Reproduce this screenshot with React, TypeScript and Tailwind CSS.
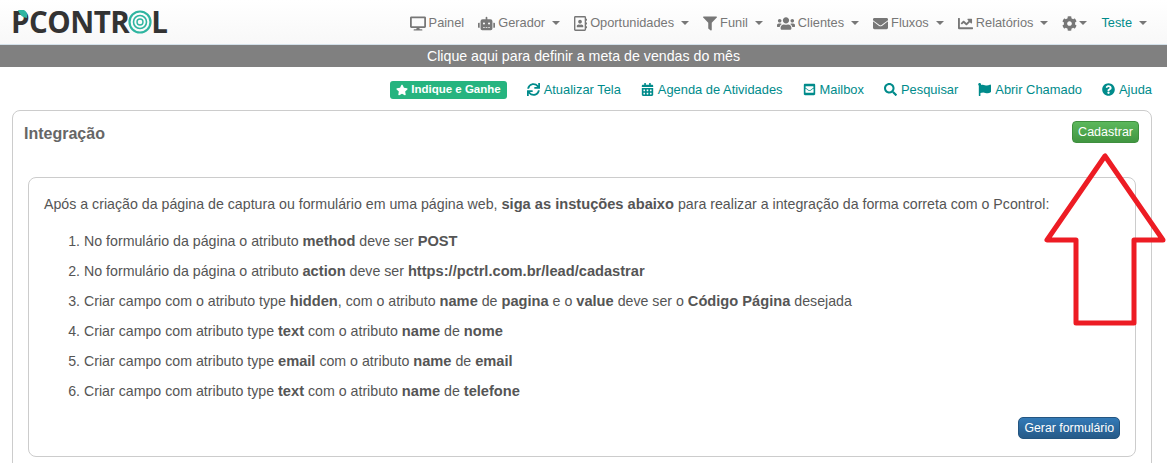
import React from "react";
import {
  FaCalendarAlt,
  FaChartLine,
  FaCog,
  FaDesktop,
  FaEnvelope,
  FaEnvelopeSquare,
  FaFilter,
  FaFlag,
  FaQuestionCircle,
  FaRegAddressBook,
  FaRobot,
  FaSearch,
  FaStar,
  FaSync,
  FaUsers,
} from "react-icons/fa";

const NAV = [
  { icon: FaDesktop, label: "Painel", w: "w-[16px]" },
  { icon: FaRobot, label: "Gerador", caret: true, w: "w-[17px]" },
  { icon: FaRegAddressBook, label: "Oportunidades", caret: true, w: "w-[13px]" },
  { icon: FaFilter, label: "Funil", caret: true, w: "w-[14px]" },
  { icon: FaUsers, label: "Clientes", caret: true, w: "w-[18px]" },
  { icon: FaEnvelope, label: "Fluxos", caret: true, w: "w-[15px]" },
  { icon: FaChartLine, label: "Relatórios", caret: true, w: "w-[15px]" },
];

const ACTIONS = [
  { icon: FaSync, label: "Atualizar Tela" },
  { icon: FaCalendarAlt, label: "Agenda de Atividades" },
  { icon: FaEnvelopeSquare, label: "Mailbox" },
  { icon: FaSearch, label: "Pesquisar" },
  { icon: FaFlag, label: "Abrir Chamado" },
  { icon: FaQuestionCircle, label: "Ajuda" },
];

const Caret = () => (
  <span className="ml-[4px] inline-block h-0 w-0 border-x-[4px] border-t-[4px] border-x-transparent border-t-[#777]" />
);

const Logo = () => (
  <div className="mt-[-3px] flex items-center text-[#333] font-['Open_Sans',sans-serif] font-bold text-[29.5px] leading-none tracking-[-0.5px]">
    <span className="relative">
      P
      <svg className="absolute left-[6px] top-[3px]" width="12" height="9" viewBox="0 0 12 9">
        <path d="M1 0 H7 Q11 2 10 8 Q3 7 1 0Z" fill="#2fb5a0" />
      </svg>
    </span>
    <span>CONTR</span>
    <svg width="24" height="24" viewBox="0 0 24 24" fill="none" stroke="#2fb5a0" className="mx-[-1px]">
      <circle cx="12" cy="12" r="10.5" strokeWidth="2.2" />
      <circle cx="12" cy="12" r="6.5" strokeWidth="1.6" />
      <circle cx="12" cy="12" r="3" strokeWidth="1.4" />
    </svg>
    <span>L</span>
  </div>
);

const App = () => {
  return (
    <div className="relative h-[463px] overflow-hidden bg-white font-['Liberation_Sans',Arial,sans-serif] text-[14.2px] text-[#555] [&_b]:text-[14.65px]">
      <nav className="flex h-[45px] items-center justify-between border-b border-[#d3e0e9] bg-gradient-to-b from-white to-[#f8f8f8] pl-[11px] pr-[20px] pt-[2px]">
        <Logo />
        <div className="flex items-center gap-[14px] text-[12.8px] text-[#777]">
          {NAV.map((n) => {
            const Icon = n.icon;
            return (
              <div key={n.label} className="flex items-center gap-[3px]">
                <Icon className={`${n.w} h-[15px]`} />
                <span>{n.label}</span>
                {n.caret && <Caret />}
              </div>
            );
          })}
          <div className="flex items-center">
            <FaCog className="h-[15px] w-[15px]" />
            <span className="ml-[2px] inline-block h-0 w-0 border-x-[4px] border-t-[4px] border-x-transparent border-t-[#777]" />
          </div>
          <div className="flex items-center text-[#008b8b]">
            <span>Teste</span>
            <span className="ml-[7px] inline-block h-0 w-0 border-x-[4px] border-t-[4px] border-x-transparent border-t-[#777]" />
          </div>
        </div>
      </nav>

      <div className="flex h-[22px] items-center justify-center bg-[#808080] pt-[1px] text-[14.2px] text-white">
        Clique aqui para definir a meta de vendas do mês
      </div>

      <div className="flex h-[43px] items-center justify-end gap-[20px] pr-[15px] pt-[3px] text-[12.9px] text-[#008b8b]">
        <div className="flex h-[18px] items-center gap-[3px] rounded-[3px] bg-[#26b47f] px-[6px] text-[11.5px] font-bold text-white">
          <FaStar className="h-[12px] w-[12px]" />
          Indique e Ganhe
        </div>
        {ACTIONS.map((a) => {
          const Icon = a.icon;
          return (
            <div key={a.label} className="flex items-center gap-[4px]">
              <Icon className="h-[13px] w-[13px]" />
              <span>{a.label}</span>
            </div>
          );
        })}
      </div>

      <div className="ml-[12px] mr-[15px] h-[400px] rounded-[8px] border border-[#ccc] px-[15px] pt-[10px]">
        <div className="flex items-start justify-between">
          <h1 className="mt-[2px] ml-[-4px] text-[16px] font-bold leading-[22px] text-[#666]">Integração</h1>
          <button className="mr-[-3px] h-[22px] rounded-[4px] border border-[#3e8f3e] bg-gradient-to-b from-[#5cb85c] to-[#419641] px-[5px] text-[12.5px] text-white">
            Cadastrar
          </button>
        </div>
        <div className="mt-[32px] h-[280px] rounded-[8px] border border-[#ccc] pl-[15px] pr-[15px] pt-[16px]">
          <p className="leading-[20px]">
            Após a criação da página de captura ou formulário em uma página web,{" "}
            <b>siga as instuções abaixo</b> para realizar a integração da forma correta com o Pcontrol:
          </p>
          <ol className="mt-[12px] list-decimal pl-[40px] leading-[30px]">
            <li>No formulário da página o atributo <b>method</b> deve ser <b>POST</b></li>
            <li>No formulário da página o atributo <b>action</b> deve ser <b>https://pctrl.com.br/lead/cadastrar</b></li>
            <li>Criar campo com o atributo type <b>hidden</b>, com o atributo <b>name</b> de <b>pagina</b> e o <b>value</b> deve ser o <b>Código Página</b> desejada</li>
            <li>Criar campo com atributo type <b>text</b> com o atributo <b>name</b> de <b>nome</b></li>
            <li>Criar campo com atributo type <b>email</b> com o atributo <b>name</b> de <b>email</b></li>
            <li>Criar campo com atributo type <b>text</b> com o atributo <b>name</b> de <b>telefone</b></li>
          </ol>
          <div className="mt-[11px] flex justify-end">
            <button className="h-[22px] rounded-[5px] border border-[#245580] bg-gradient-to-b from-[#337ab7] to-[#265a88] px-[5px] text-[12.3px] text-white">
              Gerar formulário
            </button>
          </div>
        </div>
      </div>

      <svg className="absolute left-[1040px] top-[150px]" width="127" height="180" viewBox="1040 150 127 180" fill="none">
        <path
          d="M1105 156 L1047 240 H1076 V323 H1134 V240 H1163 Z"
          stroke="#ed1c24"
          strokeWidth="5"
          strokeLinejoin="round"
        />
      </svg>
    </div>
  );
};

export default App;
